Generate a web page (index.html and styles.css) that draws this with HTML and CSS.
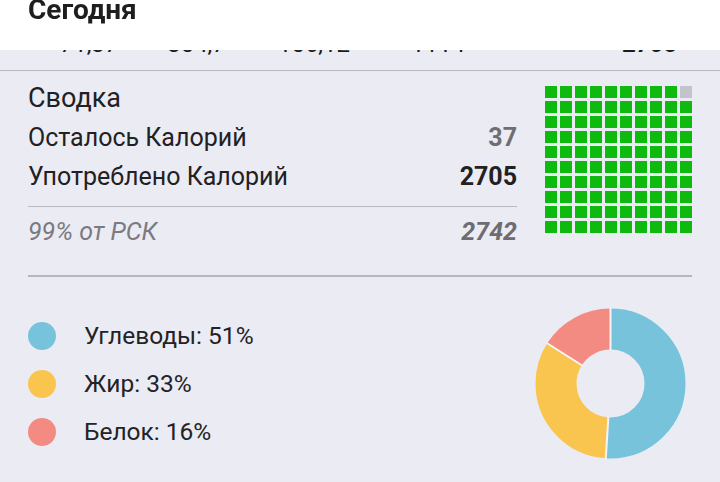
FILE: index.html
```html
<!DOCTYPE html>
<html lang="ru">
<head>
<meta charset="utf-8">
<title>Сегодня</title>
<link rel="stylesheet" href="styles.css">
</head>
<body>
<header class="topbar"><h1 class="title">Сегодня</h1></header>
<main class="page">
  <div class="totals">
    <span class="tcell">71,37</span>
    <span class="tcell">304,7</span>
    <span class="tcell">106,12</span>
    <span class="tcell">1114</span>
    <span class="tcell tbold">2705</span>
  </div>
  <section class="summary">
    <div class="summary-text">
      <div class="summary-title">Сводка</div>
      <div class="row"><span>Осталось Калорий</span><span class="val grey">37</span></div>
      <div class="row row-last"><span>Употреблено Калорий</span><span class="val">2705</span></div>
      <div class="row row-note"><span>99% от РСК</span><span class="val">2742</span></div>
    </div>
    <div class="grid">
      <i class="c"></i><i class="c"></i><i class="c"></i><i class="c"></i><i class="c"></i><i class="c"></i><i class="c"></i><i class="c"></i><i class="c"></i><i class="c off"></i>
      <i class="c"></i><i class="c"></i><i class="c"></i><i class="c"></i><i class="c"></i><i class="c"></i><i class="c"></i><i class="c"></i><i class="c"></i><i class="c"></i>
      <i class="c"></i><i class="c"></i><i class="c"></i><i class="c"></i><i class="c"></i><i class="c"></i><i class="c"></i><i class="c"></i><i class="c"></i><i class="c"></i>
      <i class="c"></i><i class="c"></i><i class="c"></i><i class="c"></i><i class="c"></i><i class="c"></i><i class="c"></i><i class="c"></i><i class="c"></i><i class="c"></i>
      <i class="c"></i><i class="c"></i><i class="c"></i><i class="c"></i><i class="c"></i><i class="c"></i><i class="c"></i><i class="c"></i><i class="c"></i><i class="c"></i>
      <i class="c"></i><i class="c"></i><i class="c"></i><i class="c"></i><i class="c"></i><i class="c"></i><i class="c"></i><i class="c"></i><i class="c"></i><i class="c"></i>
      <i class="c"></i><i class="c"></i><i class="c"></i><i class="c"></i><i class="c"></i><i class="c"></i><i class="c"></i><i class="c"></i><i class="c"></i><i class="c"></i>
      <i class="c"></i><i class="c"></i><i class="c"></i><i class="c"></i><i class="c"></i><i class="c"></i><i class="c"></i><i class="c"></i><i class="c"></i><i class="c"></i>
      <i class="c"></i><i class="c"></i><i class="c"></i><i class="c"></i><i class="c"></i><i class="c"></i><i class="c"></i><i class="c"></i><i class="c"></i><i class="c"></i>
      <i class="c"></i><i class="c"></i><i class="c"></i><i class="c"></i><i class="c"></i><i class="c"></i><i class="c"></i><i class="c"></i><i class="c"></i><i class="c"></i>
    </div>
  </section>
  <div class="divider"></div>
  <section class="macros">
    <ul class="legend">
      <li class="item"><span class="dot dot-carb"></span>Углеводы: 51%</li>
      <li class="item"><span class="dot dot-fat"></span>Жир: 33%</li>
      <li class="item"><span class="dot dot-prot"></span>Белок: 16%</li>
    </ul>
    <svg class="donut" width="151" height="151" viewBox="0 0 151 151">
      <g transform="rotate(-90 75.5 75.5)" fill="none" stroke-width="41">
        <circle cx="75.5" cy="75.5" r="54.5" stroke="#78c3dc" stroke-dasharray="174.64 400" />
        <circle cx="75.5" cy="75.5" r="54.5" stroke="#f9c54e" stroke-dasharray="0 174.64 113 400" />
        <circle cx="75.5" cy="75.5" r="54.5" stroke="#f48b82" stroke-dasharray="0 287.64 54.79 400" />
      </g>
      <g stroke="#f4f4f8" stroke-width="2">
        <line x1="75.5" y1="0" x2="75.5" y2="42"/>
        <line x1="70.73" y1="151" x2="73.4" y2="109"/>
        <line x1="11.7" y1="35" x2="47.2" y2="57.5"/>
      </g>
    </svg>
  </section>
</main>
</body>
</html>
```
FILE: styles.css
```css
html, body {
  margin: 0;
  padding: 0;
}
body {
  background: #ebebf3;
  font-family: Roboto, "Noto Sans", "Liberation Sans", sans-serif;
  color: #212124;
  width: 720px;
  height: 482px;
  overflow: hidden;
}
.topbar {
  position: fixed;
  top: 0;
  left: 0;
  right: 0;
  height: 50px;
  background: #ffffff;
  z-index: 2;
}
.title {
  margin: 0;
  padding-left: 28px;
  font-size: 28px;
  line-height: 19px;
  font-weight: 700;
  color: #1e1e20;
}
.page {
  padding-top: 32px;
}
.totals {
  display: grid;
  grid-template-columns: 122px 93px 142px 106px 1fr;
  padding-left: 28px;
  padding-bottom: 14px;
  border-bottom: 1px solid #b9b9c2;
  font-size: 24px;
  line-height: 24px;
  color: #1c1c1e;
}
.tcell {
  text-align: center;
}
.tbold {
  font-weight: 700;
  text-align: right;
  padding-right: 43px;
}
.summary {
  display: flex;
  align-items: flex-start;
  gap: 28px;
  padding: 7px 28px 0 28px;
}
.summary-text {
  width: 489px;
  font-size: 25px;
}
.summary-title {
  font-size: 27px;
  line-height: 40px;
}
.row {
  display: flex;
  justify-content: space-between;
  line-height: 39px;
}
.row-last {
  padding-bottom: 10px;
  border-bottom: 1px solid #b9b9c2;
}
.row-note {
  margin-top: 5px;
  line-height: 40px;
  font-style: italic;
  color: #7a7a80;
}
.val {
  font-weight: 700;
}
.grey {
  color: #6e6e74;
}
.row-note .val {
  color: #6c6c72;
}
.grid {
  margin-top: 8px;
  display: grid;
  grid-template-columns: repeat(10, 12px);
  grid-auto-rows: 12px;
  gap: 3px;
}
.c {
  display: block;
  background: #0fba0f;
}
.c.off {
  background: #c3c3cc;
}
.divider {
  margin: 23px 28px 0 28px;
  height: 2px;
  background: #b6b6be;
}
.macros {
  display: flex;
  justify-content: space-between;
  align-items: center;
  padding: 31px 34px 0 28px;
}
.legend {
  list-style: none;
  margin: 0;
  padding: 0;
}
.item {
  display: flex;
  align-items: center;
  gap: 28px;
  height: 48px;
  font-size: 24.5px;
  color: #232326;
}
.dot {
  width: 28px;
  height: 28px;
  border-radius: 50%;
  flex: none;
}
.dot-carb { background: #78c3dc; }
.dot-fat { background: #f9c54e; }
.dot-prot { background: #f48b82; }
.donut {
  display: block;
}
```
